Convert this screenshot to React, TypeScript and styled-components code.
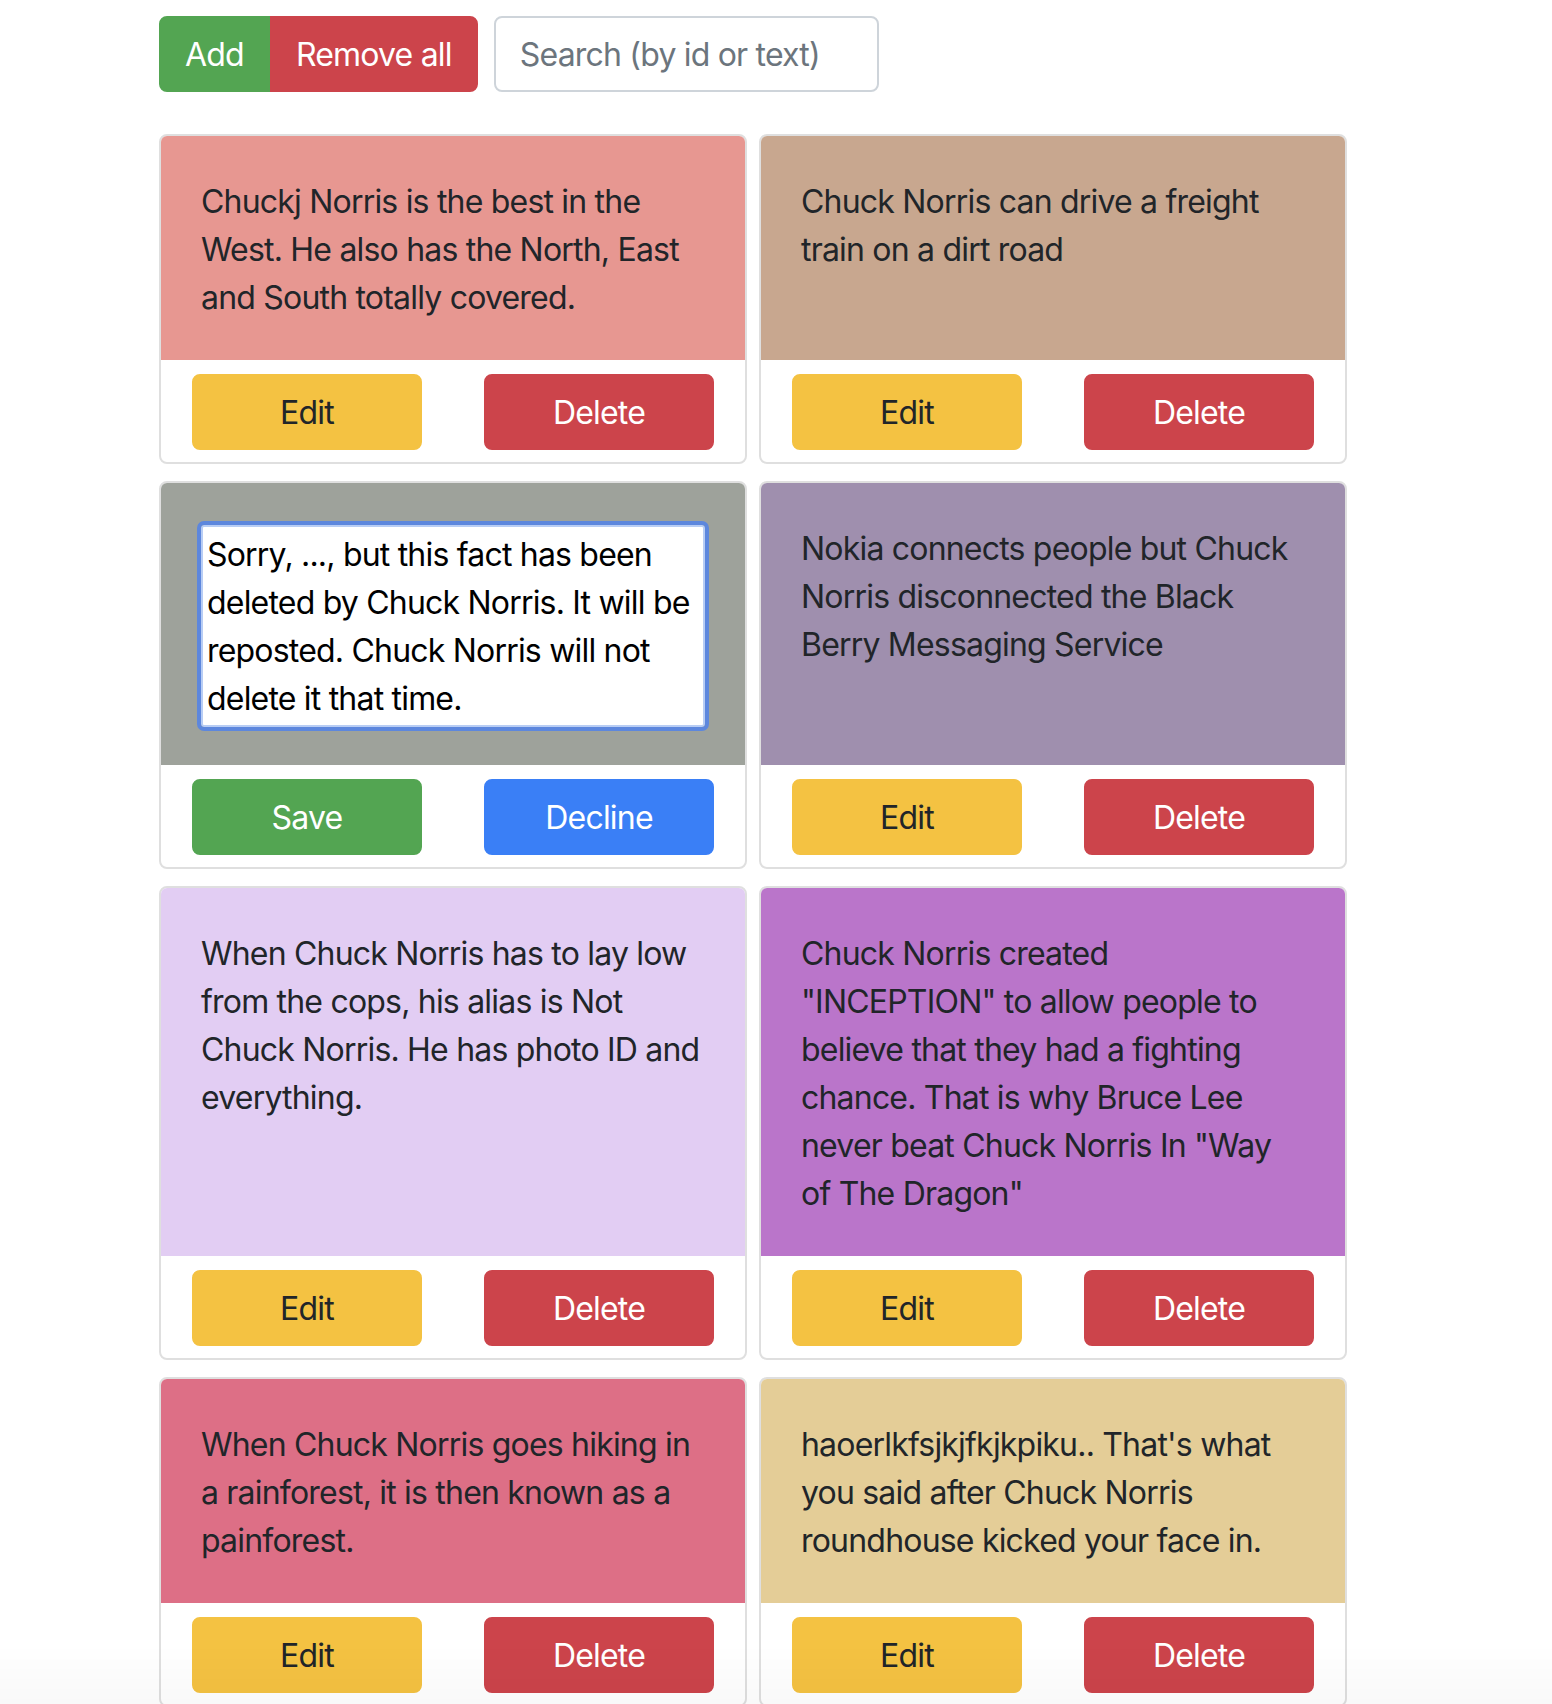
import React from 'react';
import styled, { createGlobalStyle } from 'styled-components';

type Variant = 'success' | 'danger' | 'warning' | 'primary';

interface Fact {
  id: number;
  text: string;
  color: string;
  editing?: boolean;
}

const facts: Fact[] = [
  {
    id: 1,
    text: 'Chuckj Norris is the best in the West. He also has the North, East and South totally covered.',
    color: '#e79791',
  },
  {
    id: 2,
    text: 'Chuck Norris can drive a freight train on a dirt road',
    color: '#c8a78f',
  },
  {
    id: 3,
    text: 'Sorry, ..., but this fact has been deleted by Chuck Norris. It will be reposted. Chuck Norris will not delete it that time.',
    color: '#9ea29b',
    editing: true,
  },
  {
    id: 4,
    text: 'Nokia connects people but Chuck Norris disconnected the Black Berry Messaging Service',
    color: '#9f8fae',
  },
  {
    id: 5,
    text: 'When Chuck Norris has to lay low from the cops, his alias is Not Chuck Norris. He has photo ID and everything.',
    color: '#e2cdf3',
  },
  {
    id: 6,
    text: 'Chuck Norris created "INCEPTION" to allow people to believe that they had a fighting chance. That is why Bruce Lee never beat Chuck Norris In "Way of The Dragon"',
    color: '#ba75ca',
  },
  {
    id: 7,
    text: 'When Chuck Norris goes hiking in a rainforest, it is then known as a painforest.',
    color: '#dd6f86',
  },
  {
    id: 8,
    text: "haoerlkfsjkjfkjkpiku.. That's what you said after Chuck Norris roundhouse kicked your face in.",
    color: '#e4cd97',
  },
];

const variants: Record<Variant, { bg: string; fg: string }> = {
  success: { bg: '#53a552', fg: '#fff' },
  danger: { bg: '#cc444b', fg: '#fff' },
  warning: { bg: '#f4c242', fg: '#212529' },
  primary: { bg: '#3a7ff6', fg: '#fff' },
};

const GlobalStyle = createGlobalStyle`
  body {
    margin: 0;
    background: #fff;
    font-family: Inter, "Liberation Sans", sans-serif;
    letter-spacing: -0.8px;
    color: #212529;
  }
`;

const Page = styled.div`
  width: 1188px;
  margin-left: 159px;
  padding-top: 16px;
`;

const Toolbar = styled.div`
  display: flex;
  gap: 16px;
`;

const ButtonGroup = styled.div`
  display: flex;
  & > button:first-child {
    border-top-right-radius: 0;
    border-bottom-right-radius: 0;
  }
  & > button:last-child {
    border-top-left-radius: 0;
    border-bottom-left-radius: 0;
  }
`;

const Button = styled.button<{ $variant: Variant }>`
  font-family: inherit;
  letter-spacing: inherit;
  font-size: 32px;
  line-height: 48px;
  padding: 13px 24px 11px;
  border: 2px solid ${(p) => variants[p.$variant].bg};
  border-radius: 8px;
  background: ${(p) => variants[p.$variant].bg};
  color: ${(p) => variants[p.$variant].fg};
  cursor: pointer;
`;

const CardButton = styled(Button)`
  width: 230px;
`;

const Search = styled.input`
  width: 385px;
  box-sizing: border-box;
  font-family: inherit;
  letter-spacing: inherit;
  font-size: 32px;
  line-height: 48px;
  padding: 13px 24px 11px;
  border: 2px solid #ced4da;
  border-radius: 8px;
  color: #495057;
  outline: none;
  &::placeholder {
    color: #6c757d;
  }
`;

const Grid = styled.div`
  display: grid;
  grid-template-columns: 588px 588px;
  column-gap: 12px;
  row-gap: 17px;
  margin-top: 42px;
`;

const Card = styled.div`
  display: flex;
  flex-direction: column;
  border: 2px solid #dfdfdf;
  border-radius: 8px;
  overflow: hidden;
  background: #fff;
`;

const CardBody = styled.div<{ $color: string }>`
  flex: 1;
  padding: 42px 40px 38px;
  background: ${(p) => p.$color};
  font-size: 32px;
  line-height: 48px;
`;

const CardFooter = styled.div`
  display: flex;
  justify-content: space-around;
  padding: 14px 0 12px;
`;

const EditArea = styled.textarea`
  display: block;
  width: 100%;
  box-sizing: border-box;
  margin: 0;
  font-family: inherit;
  letter-spacing: inherit;
  font-size: 32px;
  line-height: 48px;
  color: #000;
  padding: 4px 4px 2px;
  border: 2px solid #b8cdf4;
  border-radius: 3px;
  outline: 4px solid #5d87dd;
  resize: none;
  overflow: hidden;
  background: #fff;
`;

const BottomFade = styled.div`
  position: fixed;
  left: 0;
  right: 0;
  bottom: 0;
  height: 60px;
  pointer-events: none;
  background: linear-gradient(to bottom, rgba(0, 0, 0, 0), rgba(0, 0, 0, 0.025));
`;

export default function App() {
  return (
    <>
      <GlobalStyle />
      <Page>
        <Toolbar>
          <ButtonGroup>
            <Button $variant="success">Add</Button>
            <Button $variant="danger">Remove all</Button>
          </ButtonGroup>
          <Search placeholder="Search (by id or text)" />
        </Toolbar>
        <Grid>
          {facts.map((fact) => (
            <Card key={fact.id}>
              <CardBody $color={fact.color}>
                {fact.editing ? (
                  <EditArea rows={4} defaultValue={fact.text} />
                ) : (
                  fact.text
                )}
              </CardBody>
              <CardFooter>
                {fact.editing ? (
                  <>
                    <CardButton $variant="success">Save</CardButton>
                    <CardButton $variant="primary">Decline</CardButton>
                  </>
                ) : (
                  <>
                    <CardButton $variant="warning">Edit</CardButton>
                    <CardButton $variant="danger">Delete</CardButton>
                  </>
                )}
              </CardFooter>
            </Card>
          ))}
        </Grid>
      </Page>
      <BottomFade />
    </>
  );
}
